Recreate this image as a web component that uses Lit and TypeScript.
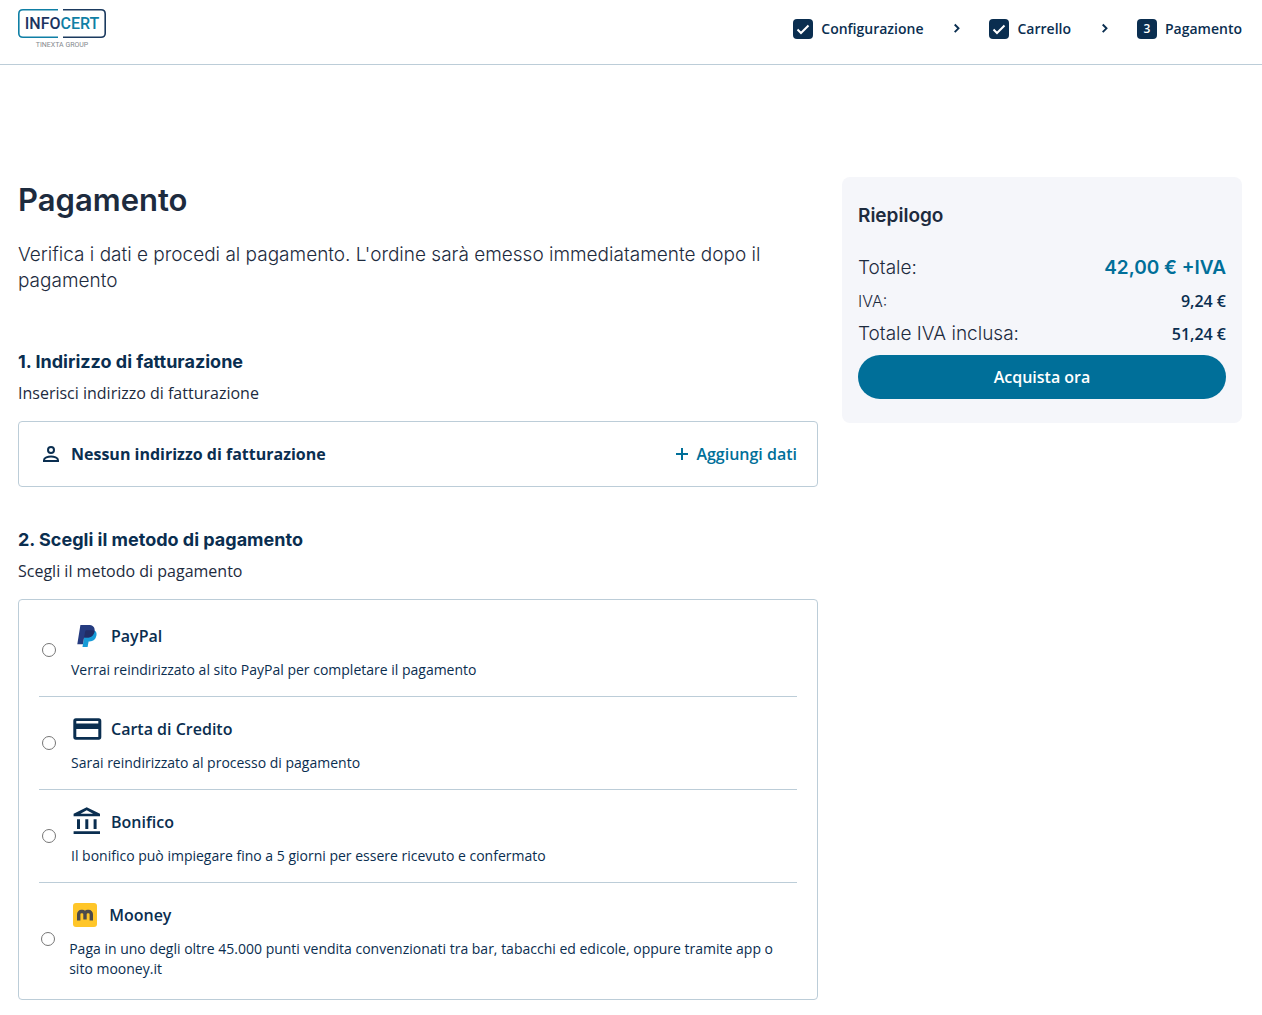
import { LitElement, html, css, TemplateResult } from "lit";
import { customElement, property, state } from "lit/decorators.js";

interface PaymentMethod {
  id: string;
  name: string;
  description: string;
  icon: TemplateResult;
}

const paypalIcon = html`<svg class="icon" viewBox="0 0 32 32" aria-hidden="true">
  <path fill="#179bd7" d="M23.6 10.6c1.900 1.100 2.300 2.900 1.800 5.200-.8 3.700-3.200 5.600-6.900 5.600h-.9l-1 5.600h-5.100l2-12.500z" />
  <path fill="#253b80" d="M9.400 5h8.100c3.900 0 6.600 1.800 6.100 5.800-.7 4.700-3.500 6.800-7.800 6.800h-2.700l-1.200 6.700H6.300z" />
  <path fill="#222d65" d="M14.200 11.300c.1-.7.600-1.100 1.300-1.100h5.700c.9 0 1.700.2 2.400.6-.6 4.800-3.600 6.800-7.800 6.800h-2.700z" />
</svg>`;

const cardIcon = html`<svg class="icon" viewBox="0 0 32 32" aria-hidden="true">
  <path fill="#0a2e50" fill-rule="evenodd" d="M4.900 5.300h22.800a2.600 2.600 0 0 1 2.600 2.600v16.200a2.600 2.600 0 0 1-2.600 2.600H4.900A2.600 2.600 0 0 1 2.300 24.100V7.900a2.600 2.600 0 0 1 2.600-2.600zM5.300 8v2.600h22V8zM5.300 16v8h22v-8z" />
</svg>`;

const bankIcon = html`<svg class="icon" viewBox="0 0 32 32" aria-hidden="true">
  <path fill="#0a2e50" fill-rule="evenodd" d="M15.700 1.300L29 7.700V10.300H2.600V7.700zM15.700 4.200L9.500 7.700h12.600zM6 13.300h3v9.700H6zm8.300 0h3v9.700h-3zm8.300 0h3v9.700h-3zM2.600 25.300h26.400v2.700H2.600z" />
</svg>`;

const mooneyIcon = html`<svg class="icon" viewBox="0 0 32 32" aria-hidden="true">
  <rect x="4" y="4" width="24" height="24" rx="3" fill="#ffc629" />
  <path fill="none" stroke="#4b4a4c" stroke-width="3.400" d="M9.700 21.500V15.500a2.800 2.800 0 0 1 2.800-3h.7a2.800 2.800 0 0 1 2.800 3v5M16 15.500a2.800 2.800 0 0 1 2.800-3h.7a2.800 2.800 0 0 1 2.800 3v6" />
</svg>`;

const METHODS: PaymentMethod[] = [
  {
    id: "paypal",
    name: "PayPal",
    description: "Verrai reindirizzato al sito PayPal per completare il pagamento",
    icon: paypalIcon,
  },
  {
    id: "carta",
    name: "Carta di Credito",
    description: "Sarai reindirizzato al processo di pagamento",
    icon: cardIcon,
  },
  {
    id: "bonifico",
    name: "Bonifico",
    description: "Il bonifico può impiegare fino a 5 giorni per essere ricevuto e confermato",
    icon: bankIcon,
  },
  {
    id: "mooney",
    name: "Mooney",
    description:
      "Paga in uno degli oltre 45.000 punti vendita convenzionati tra bar, tabacchi ed edicole, oppure tramite app o sito mooney.it",
    icon: mooneyIcon,
  },
];

const STEPS = ["Configurazione", "Carrello", "Pagamento"];
const CURRENT_STEP = 2;

@customElement("checkout-header")
export class CheckoutHeader extends LitElement {
  static styles = css`
    :host {
      display: block;
      border-bottom: 1px solid #bccdd8;
    }
    .bar {
      display: flex;
      justify-content: space-between;
      align-items: flex-start;
      height: 64px;
      box-sizing: border-box;
      padding: 8px 20px 0 18px;
    }
    .logo {
      display: block;
      width: 88px;
      height: 42px;
    }
    .word {
      font-family: Roboto, sans-serif;
      font-size: 16px;
      font-weight: 500;
    }
    .group {
      font-family: Roboto, sans-serif;
      font-size: 7px;
    }
    .steps {
      display: flex;
      gap: 28px;
      margin: 0;
      padding: 11px 0 0;
      list-style: none;
      color: #0a2e50;
      font: 600 14px/20px "Open Sans", sans-serif;
    }
    .step {
      display: flex;
      align-items: center;
      gap: 8px;
    }
    .badge {
      display: flex;
      align-items: center;
      justify-content: center;
      width: 20px;
      height: 20px;
      border-radius: 4px;
      background: #0a2e50;
      color: #fff;
      font-size: 12px;
    }
    .check {
      width: 14px;
      height: 14px;
    }
    .chevron {
      width: 10px;
      height: 20px;
      margin-left: 20px;
    }
  `;

  render() {
    return html`
      <header class="bar">
        <a class="home" href="#" aria-label="InfoCert">
          <svg class="logo" viewBox="0 0 88 42">
            <g fill="none" stroke-width="1.600">
              <path stroke="#0f7fa5" d="M40 1.800H5Q.8 1.800.8 6V25.200Q.8 29.200 5 29.200H40" />
              <path stroke="#1b3a5f" d="M45 1.800H83Q87.200 1.800 87.200 6V25.200Q87.200 29.200 83 29.200H45" />
            </g>
            <text class="word" x="44" y="21" text-anchor="middle" fill="#1b3360">INFO<tspan fill="#0f7fa5">CERT</tspan></text>
            <text class="group" x="44" y="39" text-anchor="middle" fill="#85898d">TINEXTA GROUP</text>
          </svg>
        </a>
        <ol class="steps">
          ${STEPS.map(
            (label, i) => html`<li class="step">
              <span class="badge">
                ${i < CURRENT_STEP
                  ? html`<svg class="check" viewBox="0 0 14 14" aria-hidden="true">
                      <path fill="none" stroke="#fff" stroke-width="2" d="M1.500 7.500L5 11l7.500-7.500" />
                    </svg>`
                  : i + 1}
              </span>
              <span>${label}</span>
              ${i < STEPS.length - 1
                ? html`<svg class="chevron" viewBox="0 0 10 20" aria-hidden="true">
                    <path fill="none" stroke="#0a2e50" stroke-width="1.900" d="M3.700 5.500L7.500 9.300L3.700 13.100" />
                  </svg>`
                : ""}
            </li>`
          )}
        </ol>
      </header>
    `;
  }
}

@customElement("payment-options")
export class PaymentOptions extends LitElement {
  @property({ attribute: false }) methods: PaymentMethod[] = [];
  @state() private selected = "";

  static styles = css`
    :host {
      display: block;
      padding: 4px 20px;
      border: 1px solid #bccdd8;
      border-radius: 4px;
      color: #0a2e50;
      font: 400 14px/20px "Open Sans", sans-serif;
    }
    .option {
      display: flex;
      align-items: center;
      padding: 16px 0;
      border-bottom: 1px solid #bccdd8;
    }
    .option:last-child {
      border-bottom: 0;
    }
    .pick {
      display: flex;
      justify-content: center;
      box-sizing: border-box;
      width: 32px;
      padding-right: 12px;
    }
    .radio {
      flex: none;
      width: 14px;
      height: 14px;
      margin: 0;
    }
    .title {
      display: flex;
      align-items: center;
      gap: 8px;
      margin-bottom: 8px;
      font-size: 16px;
      font-weight: 600;
      line-height: 32px;
    }
    .icon {
      flex: none;
      width: 32px;
      height: 32px;
    }
    .text {
      display: block;
    }
  `;

  render() {
    return this.methods.map(
      (m) => html`<div class="option">
        <span class="pick">
          <input
            class="radio"
            type="radio"
            name="method"
            id=${m.id}
            .checked=${this.selected === m.id}
            @change=${() => (this.selected = m.id)}
          />
        </span>
        <label class="body" for=${m.id}>
          <span class="title">${m.icon}${m.name}</span>
          <span class="text">${m.description}</span>
        </label>
      </div>`
    );
  }
}

@customElement("order-summary")
export class OrderSummary extends LitElement {
  static styles = css`
    :host {
      display: block;
      padding: 24px 16px;
      border-radius: 8px;
      background: #f5f6fa;
      color: #1d2b3e;
      font: 300 19px/30px Inter, sans-serif;
    }
    .heading {
      margin: 0 0 22px;
      font-size: 19px;
      font-weight: 600;
      line-height: 30px;
    }
    .rows {
      display: flex;
      flex-direction: column;
      gap: 6px;
      margin: 0 0 6px;
    }
    .row {
      display: flex;
      justify-content: space-between;
      align-items: center;
    }
    .tax {
      font-size: 16px;
      line-height: 24px;
    }
    .value {
      margin: 0;
      color: #0a2e50;
      font: 600 16px/24px "Open Sans", sans-serif;
    }
    .price {
      margin: 0;
      color: #006f99;
      font-weight: 600;
    }
    .buy {
      display: block;
      width: 100%;
      height: 44px;
      border: 0;
      border-radius: 22px;
      background: #006f99;
      color: #fff;
      font: 600 16px/24px "Open Sans", sans-serif;
      cursor: pointer;
    }
  `;

  render() {
    return html`
      <h2 class="heading">Riepilogo</h2>
      <dl class="rows">
        <div class="row"><dt>Totale:</dt><dd class="price">42,00 € +IVA</dd></div>
        <div class="row tax"><dt>IVA:</dt><dd class="value">9,24 €</dd></div>
        <div class="row"><dt>Totale IVA inclusa:</dt><dd class="value">51,24 €</dd></div>
      </dl>
      <button class="buy" type="button">Acquista ora</button>
    `;
  }
}

@customElement("app-root")
export class AppRoot extends LitElement {
  static styles = css`
    :host {
      display: block;
      background: #fff;
      color: #1d2b3e;
      font: 400 16px/24px "Open Sans", sans-serif;
    }
    .page {
      display: grid;
      grid-template-columns: minmax(0, 2fr) minmax(0, 1fr);
      gap: 24px;
      align-items: start;
      padding: 112px 20px 12px 18px;
    }
    .main {
      display: flex;
      flex-direction: column;
    }
    .title {
      margin: 0 0 19px;
      font: 600 31px/46px Inter, sans-serif;
    }
    .lead {
      margin: 0 0 15px;
      font: 300 19px/26px Inter, sans-serif;
    }
    .section {
      margin-top: 40px;
    }
    .heading {
      margin: 0 0 6px;
      color: #0a2e50;
      font: 700 18px/26px Inter, sans-serif;
    }
    .hint {
      margin: 0 0 16px;
    }
    .address {
      display: flex;
      align-items: center;
      gap: 8px;
      padding: 20px;
      border: 1px solid #bccdd8;
      border-radius: 4px;
      color: #0a2e50;
      font-weight: 700;
    }
    .glyph {
      flex: none;
      width: 24px;
      height: 24px;
    }
    .add {
      display: flex;
      align-items: center;
      gap: 8px;
      margin-left: auto;
      padding: 0;
      border: 0;
      background: none;
      color: #006f99;
      font: 600 16px/24px "Open Sans", sans-serif;
      cursor: pointer;
    }
    .plus {
      width: 12px;
      height: 12px;
    }
  `;

  render() {
    return html`
      <checkout-header></checkout-header>
      <div class="page">
        <main class="main">
          <h1 class="title">Pagamento</h1>
          <p class="lead">
            Verifica i dati e procedi al pagamento. L'ordine sarà emesso immediatamente dopo il pagamento
          </p>
          <section class="section">
            <h2 class="heading">1. Indirizzo di fatturazione</h2>
            <p class="hint">Inserisci indirizzo di fatturazione</p>
            <div class="address">
              <svg class="glyph" viewBox="0 0 24 24" aria-hidden="true">
                <g fill="none" stroke="#0a2e50" stroke-width="2">
                  <circle cx="12" cy="8" r="3" />
                  <path d="M5 19v-.8C5 15.800 9 14.500 12 14.500s7 1.300 7 3.700V19z" />
                </g>
              </svg>
              <span>Nessun indirizzo di fatturazione</span>
              <button class="add" type="button">
                <svg class="plus" viewBox="0 0 12 12" aria-hidden="true">
                  <path stroke="#006f99" stroke-width="2" d="M6 0v12M0 6h12" />
                </svg>
                Aggiungi dati
              </button>
            </div>
          </section>
          <section class="section">
            <h2 class="heading">2. Scegli il metodo di pagamento</h2>
            <p class="hint">Scegli il metodo di pagamento</p>
            <payment-options .methods=${METHODS}></payment-options>
          </section>
        </main>
        <order-summary></order-summary>
      </div>
    `;
  }
}
